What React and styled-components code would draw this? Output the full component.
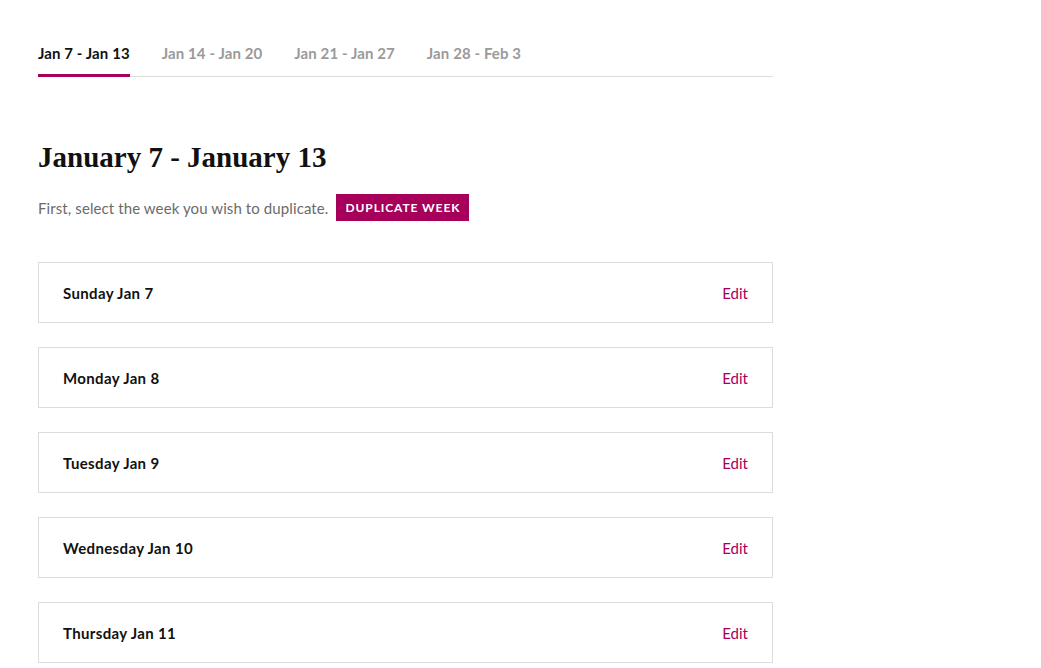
import React from "react";
import styled, { createGlobalStyle } from "styled-components";

const Global = createGlobalStyle`
  html, body { margin: 0; padding: 0; background: #fff; }
  body { font-family: Lato, "Open Sans", sans-serif; color: #111; }
`;

const ACCENT = "#a6005b";

const Page = styled.div`
  width: 735px;
  padding: 40px 0 0 38px;
`;

const Tabs = styled.nav`
  display: flex;
  gap: 32px;
  border-bottom: 1px solid #dcdcdc;
`;

const Tab = styled.button`
  background: none;
  border: 0;
  padding: 4px 0 12px;
  margin-bottom: -1px;
  font-family: Lato, sans-serif;
  font-weight: 700;
  font-size: 15px;
  letter-spacing: 0.1px;
  color: ${(p) => (p.$active ? "#111" : "#9a9a9a")};
  border-bottom: 3px solid ${(p) => (p.$active ? ACCENT : "transparent")};
  cursor: pointer;
`;

const Title = styled.h1`
  margin: 61px 0 0;
  font-family: "Liberation Serif", serif;
  font-weight: 700;
  font-size: 29px;
  line-height: 38px;
  color: #111;
`;

const Intro = styled.div`
  display: flex;
  align-items: center;
  gap: 8px;
  margin-top: 18px;
`;

const IntroText = styled.span`
  font-size: 15px;
  letter-spacing: 0.1px;
  color: #6b6b6b;
`;

const DupButton = styled.button`
  background: ${ACCENT};
  color: #fff;
  border: 0;
  height: 27px;
  padding: 0 9px;
  font-family: Lato, sans-serif;
  font-weight: 700;
  font-size: 12px;
  letter-spacing: 0.9px;
  text-transform: uppercase;
`;

const Days = styled.div`
  display: flex;
  flex-direction: column;
  gap: 24px;
  margin-top: 41px;
`;

const Day = styled.div`
  display: flex;
  align-items: center;
  justify-content: space-between;
  height: 59px;
  padding: 0 24px;
  border: 1px solid #dcdcdc;
`;

const DayName = styled.span`
  font-weight: 700;
  font-size: 15px;
  letter-spacing: 0.35px;
  color: #111;
`;

const EditLink = styled.a`
  font-size: 15px;
  color: ${ACCENT};
  text-decoration: none;
  cursor: pointer;
`;

const tabs = ["Jan 7 - Jan 13", "Jan 14 - Jan 20", "Jan 21 - Jan 27", "Jan 28 - Feb 3"];
const days = ["Sunday Jan 7", "Monday Jan 8", "Tuesday Jan 9", "Wednesday Jan 10", "Thursday Jan 11"];

export default function App() {
  return (
    <>
      <Global />
      <Page>
        <Tabs>
          {tabs.map((t, i) => (
            <Tab key={t} $active={i === 0}>{t}</Tab>
          ))}
        </Tabs>
        <Title>January 7 - January 13</Title>
        <Intro>
          <IntroText>First, select the week you wish to duplicate.</IntroText>
          <DupButton>Duplicate Week</DupButton>
        </Intro>
        <Days>
          {days.map((d) => (
            <Day key={d}>
              <DayName>{d}</DayName>
              <EditLink>Edit</EditLink>
            </Day>
          ))}
        </Days>
      </Page>
    </>
  );
}
